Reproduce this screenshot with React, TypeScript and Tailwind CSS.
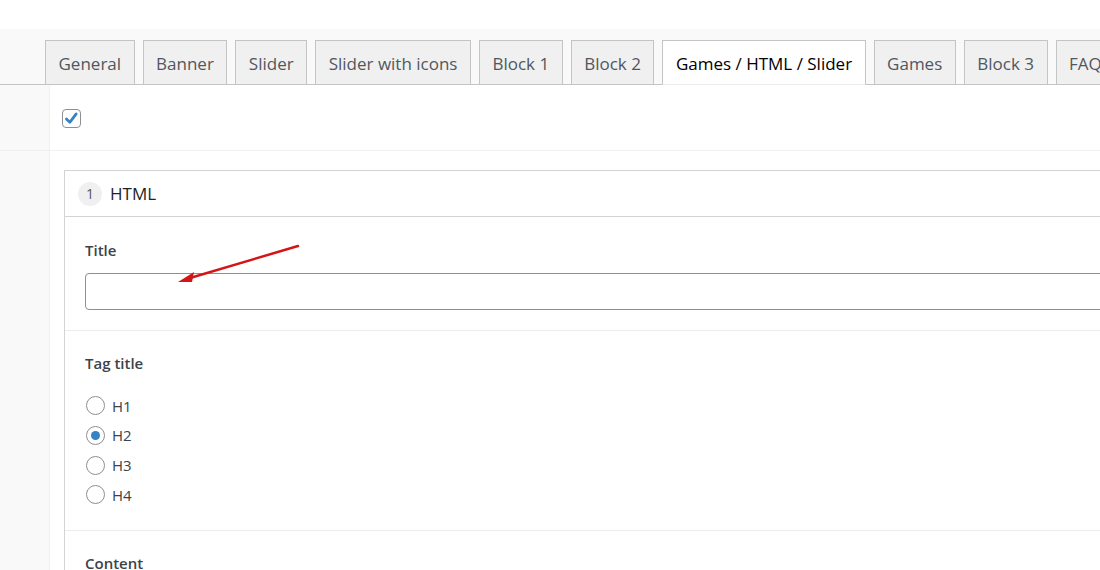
import { useState } from 'react'

const tabs = [
  'General',
  'Banner',
  'Slider',
  'Slider with icons',
  'Block 1',
  'Block 2',
  'Games / HTML / Slider',
  'Games',
  'Block 3',
  'FAQ',
]

function Radio({ label, checked }: { label: string; checked?: boolean }) {
  return (
    <label className="flex items-center gap-[7px] h-[29.7px]">
      <span className="w-[19px] h-[19px] rounded-full border border-[#8c8f94] bg-white flex items-center justify-center shrink-0">
        {checked && <span className="w-[9px] h-[9px] rounded-full bg-[#3582c4]" />}
      </span>
      <span className="text-[15px] text-[#3c434a]">{label}</span>
    </label>
  )
}

export default function App() {
  const [active] = useState('Games / HTML / Slider')

  return (
    <div className="relative w-[1100px] h-[570px] overflow-hidden bg-white font-['Open_Sans','Noto_Sans',sans-serif]">
      <div className="h-[29px] bg-white" />

      {/* tabs */}
      <div className="h-[56px] bg-[#f9f9f9] border-b border-[#c3c4c7] flex items-end gap-[8px] pl-[45px] whitespace-nowrap">
        {tabs.map((t) => {
          const on = t === active
          return (
            <div
              key={t}
              className={
                on
                  ? 'h-[45px] -mb-px px-[12.5px] pt-[2px] flex items-center border border-[#c3c4c7] border-b-[#ececec] bg-white text-black text-[17px] shrink-0'
                  : 'h-[45px] -mb-px px-[12.5px] pt-[2px] flex items-center border border-[#c3c4c7] bg-[#f0f0f1] text-[#50575e] text-[17px] shrink-0'
              }
            >
              {t}
            </div>
          )
        })}
      </div>

      {/* row 1 */}
      <div className="flex h-[66px] border-b border-[#f0f0f1]">
        <div className="w-[50px] shrink-0 bg-[#f9f9f9] border-r border-[#f0f0f1]" />
        <div className="flex items-center pl-[12px] pt-[1px]">
          <span className="w-[19px] h-[19px] rounded-[4px] border border-[#8c8f94] bg-white flex items-center justify-center">
            <svg viewBox="0 0 20 20" className="w-[17px] h-[17px]">
              <path d="M4 10.5 L8 14.5 L15.5 4.5" fill="none" stroke="#3582c4" strokeWidth="3.2" strokeLinecap="round" strokeLinejoin="round" />
            </svg>
          </span>
        </div>
      </div>

      {/* row 2 */}
      <div className="flex h-[500px]">
        <div className="w-[50px] shrink-0 bg-[#f9f9f9] border-r border-[#f0f0f1]" />
        <div className="pt-[19px] pl-[14px]">
          <div className="w-[1100px] border border-[#d3d3d6]">
            <div className="h-[46px] flex items-center gap-[8px] pl-[13px] border-b border-[#d3d3d6]">
              <span className="w-[24px] h-[24px] rounded-full bg-[#f0f0f1] text-[#50575e] text-[14px] flex items-center justify-center">
                1
              </span>
              <span className="text-[17px] text-[#1d2327]">HTML</span>
            </div>

            <div className="px-[20px] pt-[22px] pb-[20px] border-b border-[#ececec]">
              <div className="text-[15px] font-semibold text-[#3c434a] h-[22px] leading-[22px]">Title</div>
              <div className="mt-[12px] h-[37px] border border-[#8c8f94] rounded-[4px] bg-white" />
            </div>

            <div className="px-[20px] pt-[21px] pb-[20px] border-b border-[#ececec]">
              <div className="text-[15px] font-semibold text-[#3c434a] h-[22px] leading-[22px]">Tag title</div>
              <div className="mt-[17px] pl-[1px]">
                <Radio label="H1" />
                <Radio label="H2" checked />
                <Radio label="H3" />
                <Radio label="H4" />
              </div>
            </div>

            <div className="px-[20px] pt-[21px]">
              <div className="text-[15px] font-semibold text-[#3c434a] h-[22px] leading-[22px]">Content</div>
            </div>
          </div>
        </div>
      </div>

      {/* annotation arrow */}
      <svg className="absolute left-0 top-0 pointer-events-none" width="1100" height="570">
        <line x1="298" y1="246" x2="190" y2="278" stroke="#d41515" strokeWidth="2.5" strokeLinecap="round" />
        <polygon points="178,282 194,272 192,282" fill="#d41515" />
      </svg>
    </div>
  )
}
